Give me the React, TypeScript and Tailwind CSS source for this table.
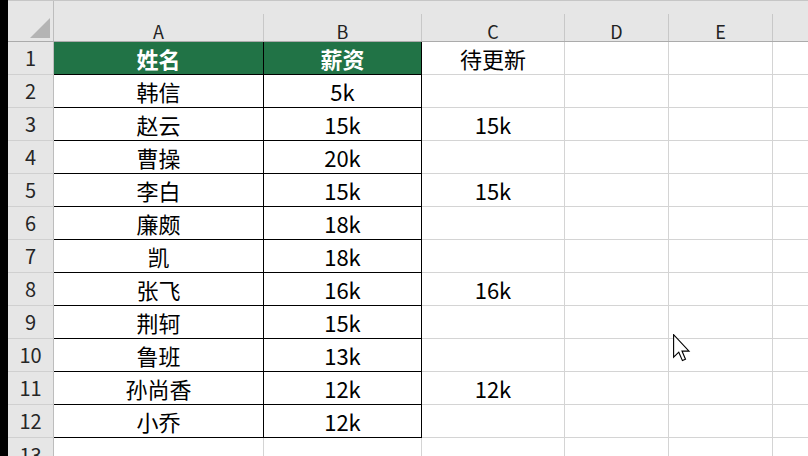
import React from 'react';

const rows = [
  { a: '姓名', b: '薪资', c: '待更新', head: true },
  { a: '韩信', b: '5k', c: '' },
  { a: '赵云', b: '15k', c: '15k' },
  { a: '曹操', b: '20k', c: '' },
  { a: '李白', b: '15k', c: '15k' },
  { a: '廉颇', b: '18k', c: '' },
  { a: '凯', b: '18k', c: '' },
  { a: '张飞', b: '16k', c: '16k' },
  { a: '荆轲', b: '15k', c: '' },
  { a: '鲁班', b: '13k', c: '' },
  { a: '孙尚香', b: '12k', c: '12k' },
  { a: '小乔', b: '12k', c: '' },
];

const font = { fontFamily: '"Noto Sans CJK SC", "Noto Sans", sans-serif' };

const colLetters = [
  { label: 'A', w: 'w-[210px]' },
  { label: 'B', w: 'w-[158px]' },
  { label: 'C', w: 'w-[143px]' },
  { label: 'D', w: 'w-[104px]' },
  { label: 'E', w: 'w-[104px]' },
];

const Cursor = () => (
  <svg className="absolute left-[672px] top-[334px]" width="20" height="28" viewBox="0 0 13 20">
    <path
      d="M0.5 0.5 L0.5 16.5 L4.2 13 L6.8 19 L9 18 L6.5 12.2 L11.5 12.2 Z"
      fill="white"
      stroke="black"
      strokeWidth="0.8"
      strokeLinejoin="miter"
    />
  </svg>
);

export default function App() {
  return (
    <div className="relative flex w-[808px] h-[456px] overflow-hidden bg-white text-black" style={font}>
      <div className="w-[8px] shrink-0 bg-black" />
      <div className="flex flex-1 flex-col">
        {/* column headers */}
        <div className="flex h-[42px] shrink-0 border-t border-b border-t-[#c6c6c6] border-b-[#ababab] bg-[#e6e6e6]">
          <div className="relative w-[46px] shrink-0 border-r border-[#bdbdbd]">
            <div className="absolute left-[22px] top-[17px] h-0 w-0 border-l-[20px] border-l-transparent [border-bottom:20px_solid_#b4b4b4]" />
          </div>
          {colLetters.map((c) => (
            <div key={c.label} className={`${c.w} shrink-0 flex flex-col`}>
              <div className="mt-[13px] flex flex-1 items-center justify-center border-r border-[#c8c8c8] pt-[6px] text-[18px] leading-[20px] text-[#222]">
                {c.label}
              </div>
            </div>
          ))}
          <div className="flex-1" />
        </div>

        {/* data rows */}
        {rows.map((r, i) => (
          <div key={i} className="flex h-[33px] shrink-0 leading-[26px]">
            <div className="flex w-[46px] shrink-0 items-center justify-center border-r border-b border-r-[#bdbdbd] border-b-[#d0d0d0] bg-[#e6e6e6] text-[20px] text-[#262626]">
              {i + 1}
            </div>
            <div
              className={`flex w-[210px] shrink-0 items-center justify-center border-r border-b border-black text-[22px] ${
                r.head ? 'bg-[#217346] font-bold text-white' : ''
              }`}
            >
              {r.a}
            </div>
            <div
              className={`flex w-[158px] shrink-0 items-center justify-center border-r border-b border-black text-[22px] ${
                r.head ? 'bg-[#217346] font-bold text-white' : ''
              }`}
            >
              {r.b}
            </div>
            <div className="flex w-[143px] shrink-0 items-center justify-center border-r border-b border-r-[#d4d4d4] border-b-[#d4d4d4] text-[22px]">
              {r.c}
            </div>
            <div className="w-[104px] shrink-0 border-r border-b border-[#d4d4d4]" />
            <div className="w-[104px] shrink-0 border-r border-b border-[#d4d4d4]" />
            <div className="flex-1 border-b border-[#d4d4d4]" />
          </div>
        ))}

        {/* row 13, partly visible */}
        <div className="flex h-[33px] shrink-0 leading-[26px]">
          <div className="flex w-[46px] shrink-0 items-center justify-center border-r border-[#bdbdbd] bg-[#e6e6e6] text-[20px] text-[#262626]">
            13
          </div>
          <div className="w-[210px] shrink-0 border-r border-[#d4d4d4]" />
          <div className="w-[158px] shrink-0 border-r border-[#d4d4d4]" />
          <div className="w-[143px] shrink-0 border-r border-[#d4d4d4]" />
          <div className="w-[104px] shrink-0 border-r border-[#d4d4d4]" />
          <div className="w-[104px] shrink-0 border-r border-[#d4d4d4]" />
          <div className="flex-1" />
        </div>
      </div>
      <Cursor />
    </div>
  );
}
